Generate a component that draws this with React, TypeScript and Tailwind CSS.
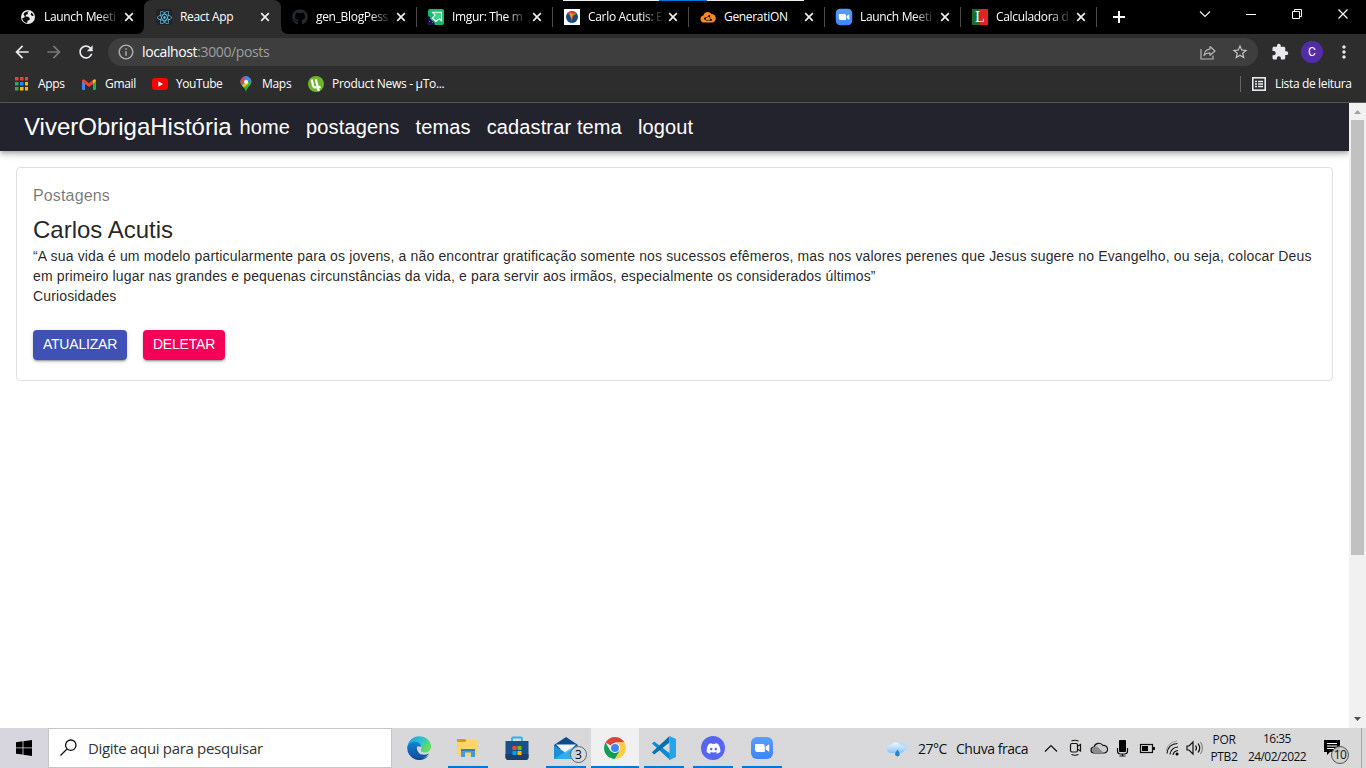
import type { ReactNode } from "react";
import { FaReact, FaGithub, FaDiscord } from "react-icons/fa";
import { MdExtension, MdStarBorder, MdArrowBack, MdArrowForward, MdRefresh, MdInfoOutline, MdMoreVert } from "react-icons/md";

function ZoomIcon({ size }: { size: number }) {
  return (
    <svg width={size} height={size} viewBox="0 0 24 24" className="block shrink-0">
      <defs>
        <linearGradient id="zoomg" x1="0" y1="0" x2="0" y2="1">
          <stop offset="0" stopColor="#5a9dff" />
          <stop offset="1" stopColor="#3f84f8" />
        </linearGradient>
      </defs>
      <rect x="1" y="1" width="22" height="22" rx="6" fill="url(#zoomg)" />
      <path d="M5 8h7.5a2.3 2.3 0 0 1 2.3 2.3V16H7.3A2.3 2.3 0 0 1 5 13.7z M15.6 10.8 18.2 8.8q1-.6 1 .5v5.4q0 1.1-1 .5l-2.6-2z" fill="#fff" />
    </svg>
  );
}

const globe = (
  <svg width="16" height="16" viewBox="0 0 16 16">
    <circle cx="8" cy="8" r="7" fill="#e8eaed" />
    <path d="M9 2.200 7.500 3.300 8 5 6 5.800 5.500 7.500l2.500.3 1.700 1.200L9.500 11l-2 .8-.3 2.200A6 6 0 0 1 2.200 9l2-.2.6-1.600-1.300-1.700 1-1.800A6.300 6.300 0 0 1 9 2.200z M11.500 3.500a6 6 0 0 1 2.200 3.300l-1.700.2-1.300-1.500z" fill="#050505" />
  </svg>
);

const react = (
  <span className="flex size-4 items-center justify-center rounded-[2px] bg-[#20232a]">
    <FaReact size={15} color="#61c9e8" />
  </span>
);

const imgur = (
  <svg width="16" height="16" viewBox="0 0 16 16">
    <rect width="16" height="16" rx="2" fill="#1bb76e" />
    <path d="M4.500 3.200h9v8.500l-2.400-1.900-3.100 2.700L4.200 9.200 7 6z" fill="#35d68c" stroke="#fff" strokeWidth="1.100" />
    <path d="M0 7l2 1 1 3 3 2 1 3H2q-2 0-2-2z" fill="#171544" />
    <path d="M2 9l1 1M1 12l1 1M4 13l1 1" stroke="#6a67c0" strokeWidth="1" />
  </svg>
);

const carlo = (
  <svg width="16" height="16" viewBox="0 0 16 16">
    <rect width="16" height="16" fill="#fff" />
    <circle cx="8" cy="8" r="6" fill="#164a7c" />
    <path d="M3.500 4Q7.500.5 12.500 4.500L9.500 6.500 7.500 13 6.500 7z" fill="#e24a25" />
    <path d="M5.500 4 9 5 7.300 10z" fill="#f39a2e" />
    <path d="M9 6.800 12.500 4.700 10 5z" fill="#59b947" />
  </svg>
);

const cloud = (
  <svg width="16" height="16" viewBox="0 0 16 16">
    <path d="M3.600 13.500a3.500 3.500 0 0 1-.3-6.900A4.500 4.500 0 0 1 11.500 5a4.200 4.200 0 0 1 4.300 4.300 4.100 4.100 0 0 1-4.100 4.200z" fill="#fb8b1e" />
    <path d="M5 9.500 9 7 11 11 6.500 11.500z" fill="none" stroke="#111" strokeWidth=".7" />
    <circle cx="5" cy="9.700" r="1.100" fill="#111" />
    <circle cx="9.300" cy="7" r="1.100" fill="#111" />
    <circle cx="11" cy="11" r="1.100" fill="#111" />
  </svg>
);

const calc = (
  <span className="flex size-4 items-center justify-center bg-[linear-gradient(90deg,#1c6b2b_50%,#e32225_50%)] font-['Liberation_Serif',serif] text-[16px] leading-4 text-white">
    L
  </span>
);

const tabs: { icon: ReactNode; title: string }[] = [
  { icon: globe, title: "Launch Meeti" },
  { icon: react, title: "React App" },
  { icon: <FaGithub size={16} color="#24292e" />, title: "gen_BlogPess" },
  { icon: imgur, title: "Imgur: The m" },
  { icon: carlo, title: "Carlo Acutis: E" },
  { icon: cloud, title: "GeneratiON" },
  { icon: <ZoomIcon size={18} />, title: "Launch Meeti" },
  { icon: calc, title: "Calculadora d" },
];

function TabStrip() {
  return (
    <div className="relative flex h-[34px] bg-black pl-2">
      <div className="absolute left-[563px] top-0 flex h-px">
        <div className="w-24 bg-[#eee]" />
        <div className="w-12 bg-[#0078d7]" />
        <div className="w-[97px] bg-[#eee]" />
      </div>
      {tabs.map((t, i) => (
        <div key={i} className="relative flex h-[34px] w-[136px] shrink-0 items-center pl-3">
          {i === 1 && (
            <svg className="absolute -left-2 top-0" width="153" height="34">
              <path d="M0 34Q8 34 8 26V8Q8 0 16 0H137Q145 0 145 8V26Q145 34 153 34Z" fill="#2d2d2d" />
            </svg>
          )}
          <div className="relative flex size-4 shrink-0 items-center justify-center">{t.icon}</div>
          <div className={`relative ml-2 w-[74px] whitespace-nowrap text-[12px] leading-5 tracking-[-0.32px] text-white ${i === 1 || i === 5 ? "" : "[mask-image:linear-gradient(90deg,#000_54px,transparent_76px)]"}`}>
            {t.title}
          </div>
          <svg className="relative ml-[6px] shrink-0" width="10" height="10" viewBox="0 0 10 10">
            <path d="M1.200 1.200 8.800 8.800M8.800 1.200 1.200 8.800" stroke="#eee" strokeWidth="1.700" />
          </svg>
          {i > 1 && <div className="absolute right-[-1px] top-[7px] h-5 w-px bg-[#4a4a4a]" />}
        </div>
      ))}
      <svg className="ml-[17px] mt-[11px]" width="12" height="12"><path d="M6 0V12M0 6H12" stroke="#fff" strokeWidth="2" /></svg>
      <svg className="ml-auto shrink-0" width="186" height="34" viewBox="1180 0 186 34" fill="none" stroke="#fff" strokeWidth="1">
        <path d="M1200 11.500l5 5 5-5" stroke="#eee" strokeWidth="1.200" />
        <path d="M1246 14.500h10" />
        <path d="M1292.500 11.500h7v7h-7zM1294.500 11v-1.500h7v7h-1.500" />
        <path d="M1338.500 9.500l9 9M1347.500 9.500l-9 9" strokeWidth="1.200" />
      </svg>
    </div>
  );
}

function Toolbar() {
  return (
    <div className="flex h-9 items-center bg-[#2d2d2d] text-[#e8eaed]">
      <MdArrowBack className="ml-3 shrink-0" size={20} />
      <MdArrowForward className="ml-3 shrink-0 text-[#777]" size={20} />
      <MdRefresh className="ml-3 shrink-0" size={20} />
      <div className="ml-3 flex h-7 w-[1150px] items-center rounded-full bg-[#3e3e3e] pl-[9px] text-[#9f9f9f]">
        <MdInfoOutline size={18} color="#aaa" />
        <div className="ml-[7px] text-[14px] leading-5 tracking-[-0.38px]"><span className="text-white">localhost</span>:3000/posts</div>
        <svg className="ml-auto" width="18" height="18" viewBox="0 0 18 18" fill="none" stroke="#b5b5b5" strokeWidth="1.200">
          <path d="M2 6v10h12v-3.500" />
          <path d="M5 12.500C5.500 8.300 8 6.400 11 6.200V3.500L16 8l-5 4.300V9.800C8.500 9.800 6.500 10.500 5 12.500z" strokeLinejoin="round" />
        </svg>
        <MdStarBorder className="ml-[14px] mr-[9px]" size={18} color="#c4c4c4" />
      </div>
      <MdExtension className="ml-[13px]" size={18} />
      <div className="ml-[12px] flex size-[22px] items-center justify-center rounded-full bg-[#512da8] font-[Roboto,sans-serif] text-[12px] text-white">C</div>
      <MdMoreVert className="ml-[11px]" size={20} />
    </div>
  );
}

function Bookmarks() {
  const colors = ["#ea4335", "#ea4335", "#ea4335", "#34a853", "#2587f5", "#fbbc05", "#34a853", "#fbbc05", "#fbbc05"];
  return (
    <div className="flex h-[33px] items-center border-b border-[#5a5a5a] bg-[#2d2d2d] pb-[4px] text-[12px] leading-5 tracking-[-0.3px] text-white">
      <svg className="ml-[15px]" width="13" height="14">
        {colors.map((c, i) => <rect key={i} x={(i % 3) * 5} y={Math.floor(i / 3) * 5} width="3.500" height="3.500" fill={c} />)}
      </svg>
      <div className="ml-[10px] w-[28px] whitespace-nowrap">Apps</div>
      <svg className="ml-4" width="14" height="11" viewBox="0 0 14 11">
        <path d="M0 2v8q0 1 1 1h2V4z" fill="#4285f4" />
        <path d="M14 2v8q0 1-1 1h-2V4z" fill="#34a853" />
        <path d="M0 1.500 1 .2 3 1 7 4.200 11 1v4L7 8 3 5 0 3z" fill="#ea4335" />
        <path d="M11 1q3-2 3 1L11 5z" fill="#fbbc05" />
      </svg>
      <div className="ml-[9px] w-[31px] whitespace-nowrap">Gmail</div>
      <svg className="ml-4" width="16" height="12"><rect width="16" height="12" rx="3" fill="#f00" /><path d="M6.300 3.300v5.400L11 6z" fill="#fff" /></svg>
      <div className="ml-2 w-[47px] whitespace-nowrap tracking-[-0.42px]">YouTube</div>
      <svg className="ml-[17px]" width="12" height="16" viewBox="0 0 12 16">
        <defs><clipPath id="pin"><path d="M6 .3A5.500 5.500 0 0 0 .5 5.800C.5 9.500 4.500 10.500 6 15.700 7.500 10.500 11.500 9.500 11.500 5.800A5.500 5.500 0 0 0 6 .3z" /></clipPath></defs>
        <g clipPath="url(#pin)">
          <rect width="12" height="16" fill="#34a853" />
          <path d="M0 11 12 -2H0z" fill="#4285f4" />
          <path d="M0 0h4L5 5 1 8 0 7z" fill="#ea4335" />
          <path d="M0 11 7 5.500 9 7.500 2 13z" fill="#fbbc05" />
          <path d="M4 0h8v4L6 6z" fill="#4285f4" />
        </g>
        <circle cx="6" cy="5.800" r="2" fill="#fff" />
      </svg>
      <div className="ml-[10px] w-[30px] whitespace-nowrap">Maps</div>
      <svg className="ml-4" width="16" height="16" viewBox="0 0 16 16">
        <circle cx="8" cy="8" r="8" fill="#6fb52c" />
        <path d="M3.800 3.500 5 9.500Q5.800 12 8.500 11M7.800 3.300l1.500 6.200q.6 2 3.300 1.500M9.300 10.500Q9.800 13 11 15" stroke="#fff" strokeWidth="2.200" fill="none" />
      </svg>
      <div className="ml-2 whitespace-nowrap">Product News - µTo...</div>
      <div className="ml-auto h-4 w-px bg-[#666]" />
      <svg className="ml-[11px]" width="14" height="14" fill="none" stroke="#e8eaed">
        <rect x=".8" y=".8" width="12.400" height="12.400" strokeWidth="1.600" />
        <path d="M3 4.500h2M6 4.500h5M3 7h2M6 7h5M3 9.500h2M6 9.500h5" strokeWidth="1.500" />
      </svg>
      <div className="ml-[9px] mr-[14px] w-[77px] whitespace-nowrap tracking-[-0.35px]">Lista de leitura</div>
    </div>
  );
}

function Page() {
  return (
    <div className="flex min-h-0 flex-1">
      <main className="w-[1349px] bg-white font-['Liberation_Sans',Arial,sans-serif] text-black/87">
        <header className="flex h-12 items-center bg-[#23232e] pl-6 text-white shadow-[0_2px_4px_-1px_rgba(0,0,0,.2),0_4px_5px_0_rgba(0,0,0,.14),0_1px_10px_0_rgba(0,0,0,.12)]">
          <div className="w-[208px] text-[24px] leading-8">ViverObrigaHistória</div>
          <nav className="flex gap-4 pl-[7.500px] text-[20px] leading-8 tracking-[0.13px]">
            <span>home</span><span>postagens</span><span>temas</span><span>cadastrar tema</span><span>logout</span>
          </nav>
        </header>
        <section className="m-4 h-[214px] rounded-[4px] border border-black/12 p-4">
          <p className="mb-[6px] text-[16px] leading-6 tracking-[0.15px] text-black/54">Postagens</p>
          <h2 className="text-[24px] leading-8">Carlos Acutis</h2>
          <p className="text-[14px] leading-5 tracking-[0.15px]">
            “A sua vida é um modelo particularmente para os jovens, a não encontrar gratificação somente nos sucessos efêmeros, mas nos valores perenes que Jesus sugere no Evangelho, ou seja, colocar Deus em primeiro lugar nas grandes e pequenas circunstâncias da vida, e para servir aos irmãos, especialmente os considerados últimos”
          </p>
          <p className="text-[14px] leading-5 tracking-[0.15px]">Curiosidades</p>
          <div className="mt-6 flex gap-4 text-[14px] leading-[28px] tracking-[-0.2px] text-white">
            <button className="h-[30px] w-[94px] whitespace-nowrap rounded-[4px] bg-[#3f51b5] pb-0.5 shadow-[0_3px_1px_-2px_rgba(0,0,0,.2),0_2px_2px_0_rgba(0,0,0,.14),0_1px_5px_0_rgba(0,0,0,.12)]">ATUALIZAR</button>
            <button className="h-[30px] w-[82px] whitespace-nowrap rounded-[4px] bg-[#f50057] pb-0.5 shadow-[0_3px_1px_-2px_rgba(0,0,0,.2),0_2px_2px_0_rgba(0,0,0,.14),0_1px_5px_0_rgba(0,0,0,.12)]">DELETAR</button>
          </div>
        </section>
      </main>
      <div className="flex w-[17px] flex-col items-center bg-[#f1f1f1]">
        <svg width="17" height="17"><path d="M5 11h7L8.500 7z" fill="#a3a3a3" /></svg>
        <div className="h-[435px] w-[13px] bg-[#c1c1c1]" />
        <svg className="mt-auto" width="17" height="17"><path d="M5 6h7l-3.500 4z" fill="#505050" /></svg>
      </div>
    </div>
  );
}

const edge = (
  <svg width="24" height="24" viewBox="0 0 24 24">
    <defs>
      <linearGradient id="ea" x1="0" y1="0" x2="1" y2=".5"><stop offset="0" stopColor="#1c9be0" /><stop offset=".55" stopColor="#2cc0d5" /><stop offset="1" stopColor="#66df55" /></linearGradient>
      <linearGradient id="eb" x1="0" y1="0" x2="0" y2="1"><stop offset="0" stopColor="#1183d8" /><stop offset="1" stopColor="#104a98" /></linearGradient>
    </defs>
    <path d="M.3 12A11.800 11.800 0 0 1 12 .2C19 .2 24 5 24 10.500c0 4-3 6-6 6-3.500 0-5-1.500-4-3 2-4-1.500-6.500-5-6C5 8 2 10 .3 12z" fill="url(#ea)" />
    <path d="M.2 12C1 7.500 5 5.300 8.500 5.800c3.500.4 6 2.700 5.500 5.200-4-2.500-7 2-5 6 2 4.500 8 6.500 13 2A12 12 0 0 1 .2 12z" fill="url(#eb)" />
    <path d="M9.500 10.500c-3.500 4-.8 10.500 5 12 3-.5 6-2.500 7.500-5-4 2-8.500 1.500-10.500-1-1.500-2-1.800-4-2-6z" fill="#125a9f" />
  </svg>
);

const explorer = (
  <svg width="24" height="24" viewBox="0 0 24 24">
    <path d="M1 3h8l2 2v3H1z" fill="#d99b0b" />
    <path d="M1 6h8l2-2h11v16H1z" fill="#ffd664" />
    <path d="M5 21v-8h14v8h-4v-4.500H9V21z" fill="#3f9bdc" />
    <path d="M5 13h14v2H5z" fill="#2d83c6" />
  </svg>
);

const store = (
  <svg width="24" height="24" viewBox="0 0 24 24">
    <path d="M7 6V2.500q0-1 1-1h8q1 0 1 1V6" fill="none" stroke="#25b4ee" strokeWidth="1.800" />
    <path d="M.5 5h23v16q0 3-3 3h-17q-3 0-3-3z" fill="#17518b" />
    <path d="M.5 18h23v3q0 3-3 3h-17q-3 0-3-3z" fill="#193f6e" />
    <path d="M7.500 10H11.500V14H7.500z" fill="#f25022" /><path d="M12.500 10h4v4h-4z" fill="#7fba00" />
    <path d="M7.500 15h4v4h-4z" fill="#00a4ef" /><path d="M12.500 15h4v4h-4z" fill="#ffb900" />
  </svg>
);

const mail = (
  <div className="relative">
    <svg width="24" height="24" viewBox="0 0 24 24">
      <path d="M0 9 12 1l12 8v4H0z" fill="#0a4d8c" />
      <path d="M2 8.500h20L12 18z" fill="#f4f8fc" />
      <path d="M0 9l12 8 12-8v14H0z" fill="#1890dd" />
      <path d="M0 23 14 14l10-5v14z" fill="#36b7ed" opacity=".8" />
    </svg>
    <span className="absolute left-[16px] top-[10px] flex size-[17px] items-center justify-center rounded-full border border-[#666] bg-[#d5dce0]/90 text-[12px] leading-none text-black">3</span>
  </div>
);

const chrome = (
  <svg width="24" height="24" viewBox="0 0 24 24">
    <path d="M12 12 2.500 6.500A11 11 0 0 1 21.500 6.500L12 6.500z" fill="#db4437" />
    <path d="M2.500 6.500A11 11 0 0 0 12 23L16.800 14.800 12 12 7.200 14.800z" fill="#0f9d58" />
    <path d="M21.500 6.500A11 11 0 0 1 12 23L16.800 14.800 12 6.500z" fill="#ffcd40" />
    <circle cx="12" cy="12" r="5" fill="#fff" /><circle cx="12" cy="12" r="4" fill="#4285f4" />
  </svg>
);

const vscode = (
  <svg width="24" height="24" viewBox="0 0 24 24">
    <path d="M0 7.500 1.600 6q.6-.4 1.200 0L18 17.500V24z" fill="#0a8bd2" />
    <path d="M0 16.300 17.500 0v6.500L2.800 18q-.6.400-1.200 0z" fill="#0872b0" />
    <path d="M17.500 0 24 3v18l-6.500 3z" fill="#27a3ec" />
  </svg>
);

const discord = (
  <span className="flex size-6 items-center justify-center rounded-full bg-[#5865f2]"><FaDiscord size={15} color="#fff" /></span>
);

const apps: { icon: ReactNode; open?: boolean; active?: boolean }[] = [
  { icon: edge }, { icon: explorer, open: true }, { icon: store }, { icon: mail, open: true },
  { icon: chrome, active: true }, { icon: vscode, open: true }, { icon: discord, open: true }, { icon: <ZoomIcon size={24} />, open: true },
];

function Taskbar() {
  return (
    <footer className="flex h-10 bg-[linear-gradient(90deg,#d7d6df_0,#d8d8da_400px,#d9d9da_100%)] text-[#111]">
      <div className="flex w-12 items-center justify-center">
        <svg width="16" height="16" viewBox="0 0 16 16"><path d="M0 2.200 6.600 1.300V7.500H0zM7.400 1.200 16 0V7.500H7.400zM0 8.300H6.600V14.600L0 13.700zM7.400 8.300H16V16L7.400 14.700z" /></svg>
      </div>
      <div className="flex w-[344px] items-center border border-[#c5c5c7] bg-white pl-[11px]">
        <svg className="-mt-0.5" width="17" height="17" viewBox="0 0 17 17" fill="none" stroke="#111" strokeWidth="1.300"><circle cx="10.800" cy="6.200" r="5.200" /><path d="M7 10 .5 16.500" /></svg>
        <div className="ml-[11px] whitespace-nowrap text-[15px] leading-6 tracking-[-0.32px] text-[#333]">Digite aqui para pesquisar</div>
      </div>
      <div className="ml-[3px] flex gap-px">
        {apps.map((a, i) => (
          <div key={i} className={`flex h-10 w-12 flex-col items-center ${a.active ? "bg-[#f0f0f0]" : ""}`}>
            <div className="flex h-[38px] items-center pt-[2px]">{a.icon}</div>
            <div className={`h-[2px] ${a.active ? "w-12 bg-[#0078d7]" : a.open ? "w-10 bg-[#0078d7]" : "w-0"}`} />
          </div>
        ))}
      </div>
      <div className="ml-[101px] flex items-center">
        <svg width="21" height="17" viewBox="0 0 21 17">
          <defs><linearGradient id="wx" x1="0" y1="0" x2="0" y2="1"><stop offset="0" stopColor="#f3f9ff" /><stop offset="1" stopColor="#8ac4f2" /></linearGradient></defs>
          <path d="M10 10a4 4 0 1 1 .5-7.500A5 5 0 0 1 17 4a3.500 3.500 0 0 1 1 7z" fill="#b9dcf8" />
          <path d="M4 13a4 4 0 0 1 0-8A5 5 0 0 1 13 5a4 4 0 0 1 1 8z" fill="url(#wx)" />
          <path d="M10.500 9.500Q8 13 8 14a2.400 2.400 0 0 0 4.800 0Q12.800 13 10.500 9.500z" fill="#2583d8" />
        </svg>
        <div className="ml-[10px] w-[29px] whitespace-nowrap pt-0.5 text-[14px] leading-5 tracking-[-0.5px]">27°C</div>
        <div className="ml-[9px] w-[73px] whitespace-nowrap pt-0.5 text-[14px] leading-5 tracking-[-0.45px]">Chuva fraca</div>
      </div>
      <svg className="ml-[11px] shrink-0" width="164" height="40" viewBox="1040 728 164 40" fill="none" stroke="#111" strokeWidth="1.200">
        <path d="M1045 751.500l6-6 6 6" />
        <rect x="1070.500" y="743.500" width="7" height="8.500" rx="1.500" />
        <path d="M1078 746l2.500-1.500v6.500L1078 749.500M1071.500 741q3.500-1.500 7 0M1071.500 754.500q3.500 1.500 7 0" />
        <path d="M1094 753a3 3 0 0 1 0-6 5 5 0 0 1 9-1.500 3.500 3.500 0 0 1 1.500 7.500z" fill="#ccc" />
        <path d="M1093 747.500q3-2 5 0l6 5.500h-10q-4-2-1-5.500z" fill="#8a8a8a" stroke="none" />
        <rect x="1119" y="740" width="7" height="12" rx="1" fill="#000" stroke="none" />
        <path d="M1117.500 748v3q0 3 3 3h4q3 0 3-3v-3M1122.500 754v2M1119.500 756h6" />
        <rect x="1140.500" y="744.500" width="12" height="8" /><path d="M1154 747v3" strokeWidth="2" /><rect x="1142" y="746" width="6" height="5" fill="#000" stroke="none" />
        <path d="M1167 753.500Q1168 744 1177.500 743.500M1170 754.500Q1171 747.500 1178 747M1173 755q.5-4 5-4.500" />
        <path d="M1166 751Q1168 742 1177 741" stroke="#888" strokeWidth=".7" />
        <circle cx="1177" cy="754" r="1.500" fill="#000" stroke="none" />
        <path d="M1187 746h2l4-4v12l-4-4h-2z M1195.500 745.500q2 2.500 0 5M1198 743.500q3.500 4.500 0 9" /><path d="M1200.500 742q4 6 0 12" stroke="#888" />
      </svg>
      <div className="ml-[5px] flex w-[30px] flex-col items-center justify-center whitespace-nowrap text-[12px] leading-[17px] tracking-[-0.35px]"><span>POR</span><span>PTB2</span></div>
      <div className="ml-2 flex w-[60px] flex-col items-center pt-[2px] whitespace-nowrap text-[12px] leading-[18px] tracking-[-0.55px]"><span>16:35</span><span>24/02/2022</span></div>
      <div className="relative ml-[17px] mt-3">
        <svg width="17" height="16"><path d="M0 0h16v12H6l-3 3v-3H0z" /><path d="M3 3.500h10M3 6h10M3 8.500h7" stroke="#fff" /></svg>
        <span className="absolute left-[7px] top-[6px] flex size-[18px] items-center justify-center rounded-full border border-[#555] bg-[#d0d0d0]/90 text-[12px] leading-none tracking-[-0.6px]">10</span>
      </div>
      <div className="ml-auto mr-[4px] w-px bg-[#aaa]" />
    </footer>
  );
}

export default function App() {
  return (
    <div className="flex h-[768px] w-[1366px] flex-col overflow-hidden bg-white font-['Open_Sans','Noto_Sans',sans-serif]">
      <TabStrip />
      <Toolbar />
      <Bookmarks />
      <Page />
      <Taskbar />
    </div>
  );
}
